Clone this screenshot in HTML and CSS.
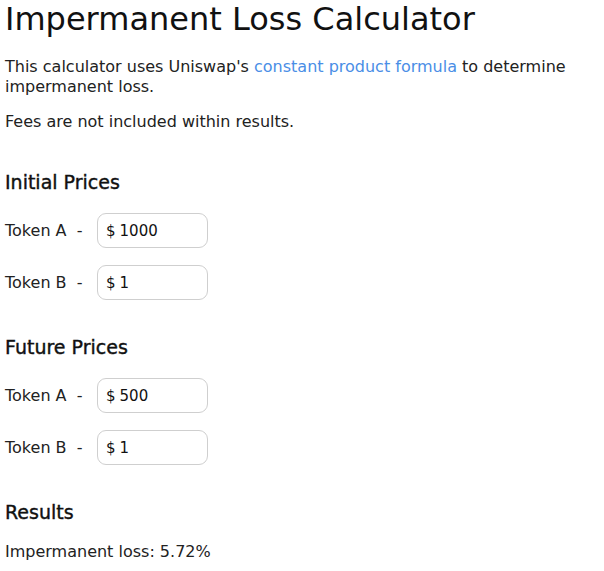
FILE: index.html
```html
<!DOCTYPE html>
<html>
<head>
<meta charset="utf-8">
<link rel="stylesheet" href="styles.css">
</head>
<body>
<main class="page">
  <h1 class="title">Impermanent Loss Calculator</h1>
  <p class="text intro">This calculator uses Uniswap's <a class="link" href="#">constant product formula</a> to determine<br>impermanent loss.</p>
  <p class="text note">Fees are not included within results.</p>

  <h2 class="section first">Initial Prices</h2>
  <div class="rows">
    <div class="row"><span class="label">Token A&nbsp; -</span><div class="field"><span class="cur">$</span><span class="val">1000</span></div></div>
    <div class="row"><span class="label">Token B&nbsp; -</span><div class="field"><span class="cur">$</span><span class="val">1</span></div></div>
  </div>

  <h2 class="section">Future Prices</h2>
  <div class="rows">
    <div class="row"><span class="label">Token A&nbsp; -</span><div class="field"><span class="cur">$</span><span class="val">500</span></div></div>
    <div class="row"><span class="label">Token B&nbsp; -</span><div class="field"><span class="cur">$</span><span class="val">1</span></div></div>
  </div>

  <h2 class="section">Results</h2>
  <p class="text result">Impermanent loss: 5.72%</p>
</main>
</body>
</html>
```
FILE: styles.css
```css
html, body {
  margin: 0;
  padding: 0;
  background: #ffffff;
}
body {
  font-family: "DejaVu Sans", "Noto Sans", sans-serif;
  color: #222222;
}
.page {
  padding: 0 5px;
}
.title {
  margin: 0;
  font-size: 32px;
  line-height: 38px;
  font-weight: 400;
  color: #111;
}
.text {
  margin: 0;
  font-size: 16px;
  line-height: 20px;
}
.intro {
  margin-top: 19px;
}
.note {
  margin-top: 15px;
}
.link {
  color: #4a8ee6;
  text-decoration: none;
}
.section {
  margin: 36px 0 0;
  font-size: 19px;
  line-height: 23px;
  font-weight: 400;
  -webkit-text-stroke: 0.4px #111;
  color: #111;
}
.section.first {
  margin-top: 39px;
}
.rows {
  display: flex;
  flex-direction: column;
  gap: 17px;
  margin-top: 19px;
}
.row {
  display: flex;
  align-items: center;
}
.label {
  font-size: 16px;
  width: 92px;
}
.field {
  width: 111px;
  height: 35px;
  box-sizing: border-box;
  border: 1px solid #cfcfcf;
  border-radius: 9px;
  display: flex;
  align-items: center;
  padding-left: 8px;
  font-size: 15px;
  color: #111;
}
.cur {
  margin-right: 4px;
}
.result {
  margin-top: 18px;
}
```
